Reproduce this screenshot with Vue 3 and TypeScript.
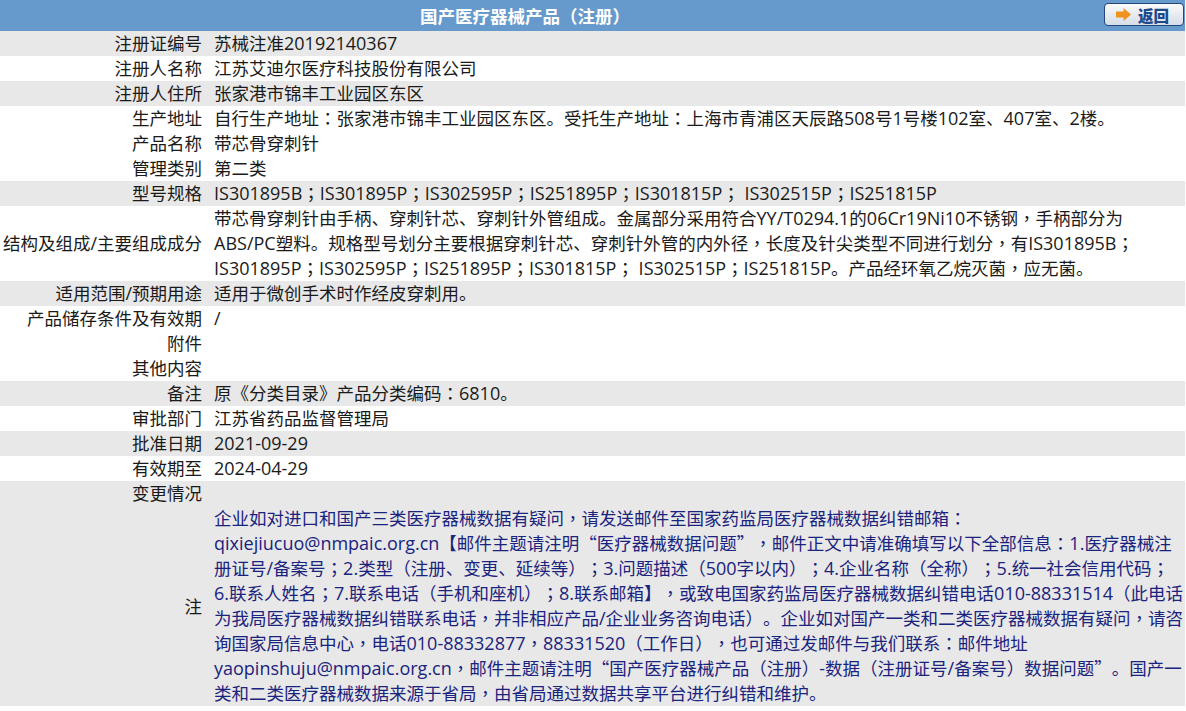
<script setup lang="ts">
interface Row { label: string; value: string[]; shade: boolean }
interface Part { text: string; kind: string }
const rows: Row[] = [
  { label: '注册证编号', value: ['苏械注准20192140367'], shade: true },
  { label: '注册人名称', value: ['江苏艾迪尔医疗科技股份有限公司'], shade: false },
  { label: '注册人住所', value: ['张家港市锦丰工业园区东区'], shade: true },
  { label: '生产地址', value: ['自行生产地址：张家港市锦丰工业园区东区。受托生产地址：上海市青浦区天辰路508号1号楼102室、407室、2楼。'], shade: false },
  { label: '产品名称', value: ['带芯骨穿刺针'], shade: false },
  { label: '管理类别', value: ['第二类'], shade: false },
  { label: '型号规格', value: ['IS301895B；IS301895P；IS302595P；IS251895P；IS301815P； IS302515P；IS251815P'], shade: true },
  { label: '结构及组成/主要组成成分', value: ['带芯骨穿刺针由手柄、穿刺针芯、穿刺针外管组成。金属部分采用符合YY/T0294.1的06Cr19Ni10不锈钢，手柄部分为', 'ABS/PC塑料。规格型号划分主要根据穿刺针芯、穿刺针外管的内外径，长度及针尖类型不同进行划分，有IS301895B；', 'IS301895P；IS302595P；IS251895P；IS301815P； IS302515P；IS251815P。产品经环氧乙烷灭菌，应无菌。'], shade: false },
  { label: '适用范围/预期用途', value: ['适用于微创手术时作经皮穿刺用。'], shade: true },
  { label: '产品储存条件及有效期', value: ['/'], shade: false },
  { label: '附件', value: [''], shade: false },
  { label: '其他内容', value: [''], shade: false },
  { label: '备注', value: ['原《分类目录》产品分类编码：6810。'], shade: true },
  { label: '审批部门', value: ['江苏省药品监督管理局'], shade: false },
  { label: '批准日期', value: ['2021-09-29'], shade: true },
  { label: '有效期至', value: ['2024-04-29'], shade: false },
  { label: '变更情况', value: [''], shade: true },
]
const note: string[] = [
  '企业如对进口和国产三类医疗器械数据有疑问，请发送邮件至国家药监局医疗器械数据纠错邮箱：',
  'qixiejiucuo@nmpaic.org.cn【邮件主题请注明“医疗器械数据问题”，邮件正文中请准确填写以下全部信息：1.医疗器械注',
  '册证号/备案号；2.类型（注册、变更、延续等）；3.问题描述（500字以内）；4.企业名称（全称）；5.统一社会信用代码；',
  '6.联系人姓名；7.联系电话（手机和座机）；8.联系邮箱】，或致电国家药监局医疗器械数据纠错电话010-88331514（此电话',
  '为我局医疗器械数据纠错联系电话，并非相应产品/企业业务咨询电话）。企业如对国产一类和二类医疗器械数据有疑问，请咨',
  '询国家局信息中心，电话010-88332877，88331520（工作日），也可通过发邮件与我们联系：邮件地址',
  'yaopinshuju@nmpaic.org.cn，邮件主题请注明“国产医疗器械产品（注册）-数据（注册证号/备案号）数据问题”。国产一',
  '类和二类医疗器械数据来源于省局，由省局通过数据共享平台进行纠错和维护。',
]
// Latin runs are a touch larger than the CJK text, and full-width punctuation sits centred in its box.
function parts(line: string): Part[] {
  return line
    .split(/([，；：（）]|[\x20-\x7e]+)/)
    .filter((text) => text !== '')
    .map((text) => ({
      text,
      kind: /^[，；：（）]$/.test(text) ? 'punct' : /^[\x20-\x7e]+$/.test(text) ? 'latin' : 'cjk',
    }))
}
</script>

<template>
  <div class="page">
    <header class="head">
      <span class="title"><span v-for="(p, j) in parts('国产医疗器械产品（注册）')" :key="j" :class="p.kind">{{ p.text }}</span></span>
      <button class="back" type="button">
        <svg class="arrow" width="15" height="13" viewBox="0 0 15 13"><path d="M0 3.5H7.5V0L15 6.5L7.5 13V9.5H0Z" fill="#f0921e" /></svg>
        <span>返回</span>
      </button>
    </header>
    <div v-for="r in rows" :key="r.label" class="row" :class="{ shade: r.shade }">
      <div class="label line"><span v-for="(p, j) in parts(r.label)" :key="j" :class="p.kind">{{ p.text }}</span></div>
      <div class="value">
        <div v-for="(line, i) in r.value" :key="i" class="line"><span v-for="(p, j) in parts(line)" :key="j" :class="p.kind">{{ p.text }}</span></div>
      </div>
    </div>
    <div class="row shade">
      <div class="label line">注</div>
      <div class="value note">
        <div v-for="(line, i) in note" :key="i" class="line"><span v-for="(p, j) in parts(line)" :key="j" :class="p.kind">{{ p.text }}</span></div>
      </div>
    </div>
  </div>
</template>

<style>
body { margin: 0; background: #fff; }
</style>

<style scoped>
.page {
  width: 1185px;
  overflow: hidden;
  font-family: "Noto Sans CJK SC", sans-serif;
  font-size: 17.5px;
  line-height: 23px;
  color: #1a1a1a;
  text-spacing-trim: space-all;
  text-autospace: no-autospace;
}
.head {
  height: 31px;
  background: #6699cc;
  display: flex;
  align-items: center;
  justify-content: center;
  padding-right: 135px;
  position: relative;
}
.title {
  color: #fff;
  font-weight: 700;
  font-size: 17.5px;
}
.punct { font-family: "Noto Sans CJK TC", sans-serif; line-height: 1; }
.latin { font-family: "Open Sans", sans-serif; font-size: 18px; line-height: 1; }
.back {
  position: absolute;
  right: 1px;
  top: 3px;
  width: 80px;
  height: 23px;
  box-sizing: border-box;
  border: 1px solid #24487c;
  border-radius: 4px;
  background: linear-gradient(#fafafa, #d5dde8);
  display: flex;
  align-items: center;
  justify-content: center;
  gap: 7px;
  padding: 0 3px 0 0;
  color: #1d4a8c;
  font: 900 15.5px "Noto Sans CJK SC", sans-serif;
}
.row {
  display: grid;
  grid-template-columns: 202px 1fr;
  column-gap: 12px;
  align-items: center;
}
.shade { background: #e8e8e8; }
.label { text-align: right; }
.line { height: 25px; white-space: nowrap; }
.note { color: #1a237e; }
</style>
